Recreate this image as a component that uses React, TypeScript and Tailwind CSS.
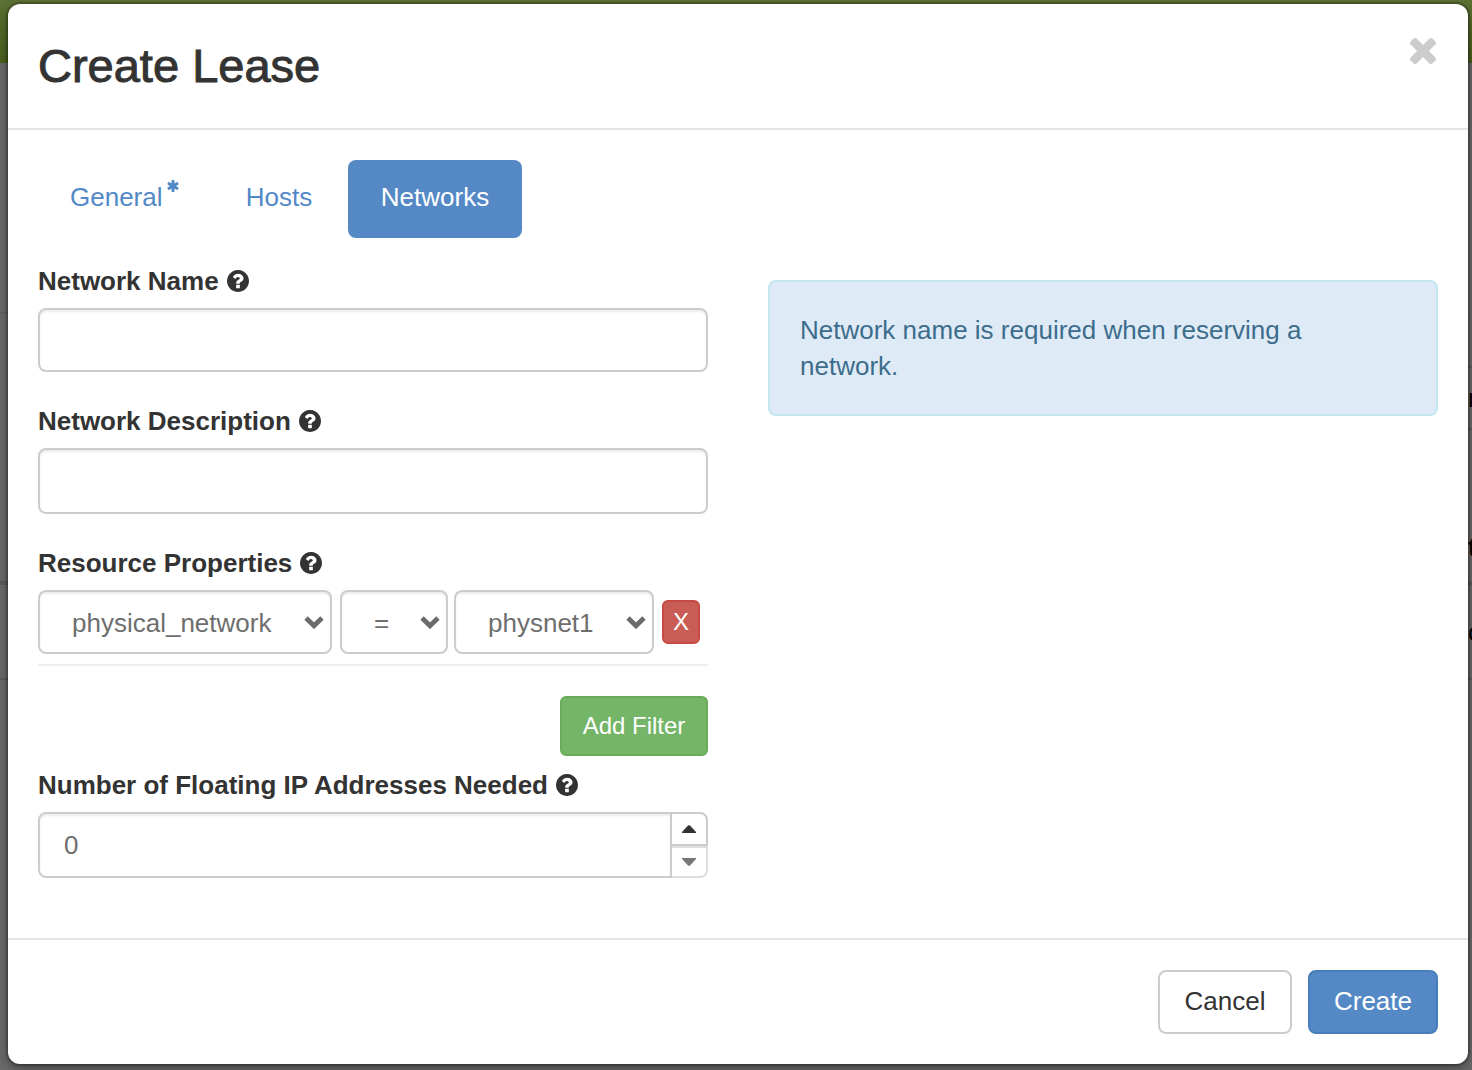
import React, { useState } from "react";

const FONT = "font-['Liberation_Sans',Arial,sans-serif]";

function QuestionIcon() {
  return (
    <svg viewBox="128 128 1536 1536" className="size-[22px] shrink-0" fill="currentColor" aria-hidden="true">
      <path d="M1024 1376v-192q0-14-9-23t-23-9h-192q-14 0-23 9t-9 23v192q0 14 9 23t23 9h192q14 0 23-9t9-23zM1280 704q0-88-55.5-163t-138.5-116-170-41q-243 0-371 213-15 24 8 42l132 100q7 6 19 6 16 0 25-12 53-68 86-92 34-24 86-24 48 0 85.5 26t37.5 59q0 38-20 61t-68 45q-63 28-115.5 86.5t-52.5 125.5v36q0 14 9 23t23 9h192q14 0 23-9t9-23q0-19 21.5-49.5t54.5-49.5q32-18 49-28.5t46-35 44.5-48 28-60.5 12.5-81zM1664 896q0 209-103 385.5t-279.5 279.5-385.5 103-385.5-103-279.5-279.5-103-385.5 103-385.5 279.5-279.5 385.5-103 385.5 103 279.5 279.5 103 385.5z" />
    </svg>
  );
}

function AsteriskIcon() {
  return (
    <svg viewBox="128 128 1536 1536" className="size-3" fill="currentColor" aria-hidden="true">
      <path d="M1546 1050q46 26 59.5 77.5t-12.5 97.5l-64 110q-26 46-77.5 59.5t-97.5-12.5l-266-153v307q0 52-38 90t-90 38h-128q-52 0-90-38t-38-90v-307l-266 153q-46 26-97.5 12.5t-77.5-59.5l-64-110q-26-46-12.5-97.5t59.5-77.5l266-154-266-154q-46-26-59.5-77.5t12.5-97.5l64-110q26-46 77.5-59.5t97.5 12.5l266 153v-307q0-52 38-90t90-38h128q52 0 90 38t38 90v307l266-153q46-26 97.5-12.5t77.5 59.5l64 110q26 46 12.5 97.5t-59.5 77.5l-266 154z" />
    </svg>
  );
}

function CloseIcon() {
  return (
    <svg viewBox="302 366 1188 1188" className="size-[26px]" fill="currentColor" aria-hidden="true">
      <path d="M1490 1322q0 40-28 68l-136 136q-28 28-68 28t-68-28l-294-294-294 294q-28 28-68 28t-68-28l-136-136q-28-28-28-68t28-68l294-294-294-294q-28-28-28-68t28-68l136-136q28-28 68-28t68 28l294 294 294-294q28-28 68-28t68 28l136 136q28 28 28 68t-28 68l-294 294 294 294q28 28 28 68z" />
    </svg>
  );
}

function FieldLabel({ htmlFor, children }: { htmlFor: string; children: React.ReactNode }) {
  return (
    <label htmlFor={htmlFor} className="mb-2.5 flex h-9 items-center gap-2 pt-0.5 font-bold whitespace-nowrap">
      {children}
      <QuestionIcon />
    </label>
  );
}

function Select({ label, id, width, padding, options }: { label: string; id?: string; width: string; padding: string; options: string[] }) {
  return (
    <span className={"relative " + width}>
      <select
        id={id}
        aria-label={label}
        className={"h-16 w-full appearance-none rounded-lg border-2 border-[#ccc] bg-white pt-0.5 text-[#6e6e6e] shadow-[inset_0_2px_2px_rgba(0,0,0,0.075)] " + padding}
      >
        {options.map((o) => (
          <option key={o}>{o}</option>
        ))}
      </select>
      <svg viewBox="0 0 20 14" className="pointer-events-none absolute top-[25px] right-2 h-3.5 w-5" fill="none" stroke="#6b6b6b" strokeWidth="4.8" aria-hidden="true">
        <path d="M2 3 10 10.8 18 3" />
      </svg>
    </span>
  );
}

function Backdrop() {
  return (
    <div className="absolute inset-0 -z-10 flex flex-col overflow-hidden bg-[#6a6a6a] text-black" aria-hidden="true">
      <div className="h-[63px] shrink-0 bg-linear-to-b from-[#5c7234] to-[#485f1c]" />
      <div className="flex min-h-0 grow justify-between">
        <div className="w-2">
          <div className="h-[251px] border-b-2 border-[#5f5f5f]" />
          <div className="h-[271px] border-b-4 border-[#5a5a5a]" />
          <div className="h-[95px] border-b-2 border-[#5a5a5a]" />
        </div>
        <div className="w-1">
          <div className="h-[251px] border-b-2 border-[#666]" />
          <div className="h-[54px] border-b-2 border-[#5a5a5a]" />
          <div className="flex h-[62px] items-center overflow-hidden border-b-2 border-[#5a5a5a]">n</div>
          <div className="flex h-[155px] items-end overflow-hidden border-b-4 border-[#5a5a5a] pb-4 font-bold">t</div>
          <div className="flex h-[95px] items-center overflow-hidden border-b-2 border-[#5a5a5a]">c</div>
        </div>
      </div>
    </div>
  );
}

const INPUT = "block w-full rounded-lg border-2 border-[#ccc] bg-white px-6 text-[#6e6e6e] shadow-[inset_0_2px_2px_rgba(0,0,0,0.075)]";
const TAB = "rounded-lg pt-5 pb-6 leading-[34px] ";

export default function App() {
  const [count, setCount] = useState(0);
  return (
    <div className={"relative isolate min-h-screen pt-1 pr-1 pb-1.5 pl-2 text-[26px] leading-9 text-[#333] " + FONT}>
      <Backdrop />
      <div role="dialog" aria-labelledby="title" className="rounded-xl bg-white shadow-[0_0_0_2px_rgba(0,0,0,0.2),0_4px_12px_rgba(0,0,0,0.4)]">
        <header className="flex items-start justify-between border-b-2 border-[#e5e5e5] p-[30px]">
          <h1 id="title" className="text-[47px] leading-16 [-webkit-text-stroke:1px_#333]">Create Lease</h1>
          <button type="button" aria-label="Close" className="mt-1 mr-0.5 text-[#ccc]">
            <CloseIcon />
          </button>
        </header>

        <form onSubmit={(e) => e.preventDefault()}>
          <div className="px-[30px] pt-[30px] pb-[60px]">
            <nav className="flex gap-1">
              <a href="#general" className={TAB + "flex w-[172px] items-start gap-1 pl-8 text-[#5289c7]"}>
                General
                <AsteriskIcon />
              </a>
              <a href="#hosts" className={TAB + "w-[130px] text-center text-[#5289c7]"}>Hosts</a>
              <a href="#networks" className={TAB + "w-[174px] bg-[#5489c6] text-center text-white"}>Networks</a>
            </nav>

            <div className="mt-6 grid grid-cols-2 gap-[60px]">
              <div>
                <FieldLabel htmlFor="name">Network Name</FieldLabel>
                <input id="name" type="text" className={"mb-[30px] h-16 " + INPUT} />
                <FieldLabel htmlFor="description">Network Description</FieldLabel>
                <input id="description" type="text" className={"mb-[30px] h-[66px] " + INPUT} />
                <FieldLabel htmlFor="property">Resource Properties</FieldLabel>
                <div className="flex items-center border-b-2 border-[#eee] pb-2.5">
                  <Select id="property" label="Property" width="mr-2 w-[294px]" padding="pl-8" options={["physical_network"]} />
                  <Select label="Operator" width="mr-1.5 w-[108px]" padding="pl-8" options={["=", "!=", ">", "<"]} />
                  <Select label="Value" width="mr-2 w-[200px]" padding="pl-8" options={["physnet1"]} />
                  <button type="button" className="h-11 w-[38px] rounded-md border-2 border-[#c64a43] bg-[#c95c55] text-2xl leading-9 text-white">X</button>
                </div>
                <div className="mt-[30px] mb-2.5 flex justify-end">
                  <button type="button" className="h-[60px] w-[148px] rounded-md border-2 border-[#67ac58] bg-[#75b567] text-2xl text-white">Add Filter</button>
                </div>
                <FieldLabel htmlFor="ips">Number of Floating IP Addresses Needed</FieldLabel>
                <div className="flex h-[66px]">
                  <input
                    id="ips"
                    type="text"
                    inputMode="numeric"
                    value={count}
                    onChange={(e) => setCount(Number(e.target.value) || 0)}
                    className="min-w-0 grow rounded-l-lg border-2 border-[#ccc] bg-white px-6 text-[#6e6e6e] shadow-[inset_0_2px_2px_rgba(0,0,0,0.075)]"
                  />
                  <div className="flex w-9 flex-col">
                    <button type="button" aria-label="Increase" onClick={() => setCount(count + 1)} className="flex h-[34px] items-center justify-center rounded-tr-lg border-y-2 border-r-2 border-[#ccc]">
                      <svg viewBox="0 0 14 8" className="h-2 w-3.5" fill="#333" aria-hidden="true"><path d="M0 8V7L6 .5Q7 0 8 .5L14 7v1z" /></svg>
                    </button>
                    <button type="button" aria-label="Decrease" onClick={() => setCount(Math.max(0, count - 1))} className="flex h-8 items-center justify-center rounded-br-lg border-y-2 border-r-2 border-[#ddd]">
                      <svg viewBox="0 0 14 8" className="h-2 w-3.5" fill="#777" aria-hidden="true"><path d="M0 0v1l6 6.500q1 .5 2 0L14 1V0z" /></svg>
                    </button>
                  </div>
                </div>
              </div>

              <p className="mt-[18px] self-start rounded-lg border-2 border-[#c4e5ee] bg-[#deebf6] py-[30px] pr-12 pl-[30px] text-[#3d6d8c]">
                Network name is required when reserving a network.
              </p>
            </div>
          </div>

          <footer className="flex justify-end gap-4 border-t-2 border-[#e5e5e5] p-[30px]">
            <button type="button" className="h-16 w-[134px] rounded-lg border-2 border-[#ccc] bg-white pb-0.5">Cancel</button>
            <button type="submit" className="h-16 w-[130px] rounded-lg border-2 border-[#477dbb] bg-[#5489c6] pb-0.5 text-white">Create</button>
          </footer>
        </form>
      </div>
    </div>
  );
}
